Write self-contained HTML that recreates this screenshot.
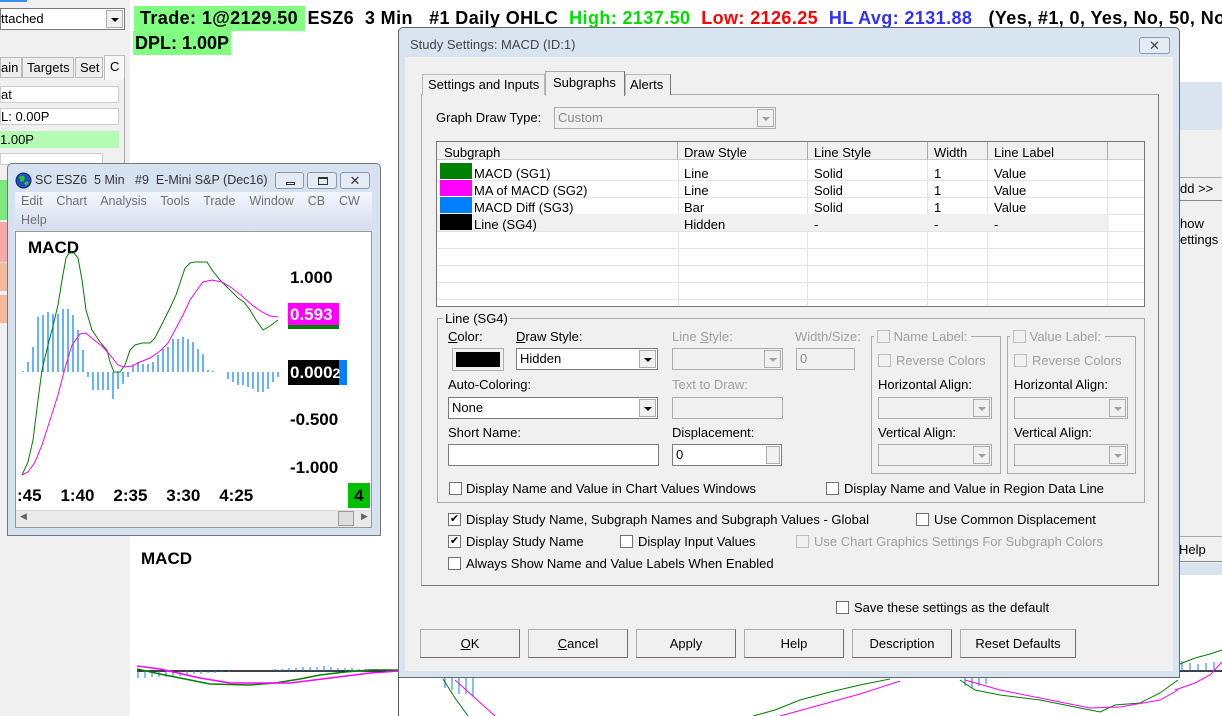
<!DOCTYPE html>
<html><head><meta charset="utf-8"><style>
*{box-sizing:border-box;margin:0;padding:0}
body{width:1222px;height:716px;position:relative;overflow:hidden;background:#fff;font-family:"Liberation Sans",sans-serif;font-size:13px;color:#000}
.a{position:absolute;white-space:nowrap}
.b{font-weight:bold}
.cb{position:absolute;width:13px;height:13px;border:1px solid #707070;background:#fff}
.cb.dis{border-color:#bcbcbc;background:#f0f0f0}
.btn{position:absolute;height:29px;border:1px solid #adadad;border-right-color:#707070;border-bottom-color:#707070;background:#f0f0f0;text-align:center;line-height:27px;font-size:13px}
.combo{position:absolute;height:22px;border:1px solid #7a7a7a;background:#fff;padding-left:3px;line-height:20px}
.combo.dis{border-color:#adadad;background:#f0f0f0;color:#888}
.arr{position:absolute;right:1px;top:1px;width:17px;height:18px;border:1px solid #adadad;background:#f0f0f0}
.arr:after{content:"";position:absolute;left:4px;top:7px;border-left:4px solid transparent;border-right:4px solid transparent;border-top:4px solid #000}
.dis .arr:after{border-top-color:#a0a0a0}
.g{color:#a0a0a0}
</style></head><body>

<!-- left panel -->
<div class="a" style="left:0;top:0;width:130px;height:716px;background:#f0f0f0"></div>
<div class="a" style="left:0;top:0;width:27px;height:2px;background:#3a8ee6"></div>
<div class="combo" style="left:0;top:8px;width:125px;height:22px;padding-left:0;line-height:20px">ttached<div class="arr"></div></div>
<div class="a" style="left:0;top:57px;width:22px;height:21px;border:1px solid #bbb;background:#eee;line-height:20px">ain</div>
<div class="a" style="left:22px;top:57px;width:52px;height:21px;border:1px solid #bbb;background:#eee;line-height:20px;padding-left:4px">Targets</div>
<div class="a" style="left:75px;top:57px;width:28px;height:21px;border:1px solid #bbb;background:#eee;line-height:20px;padding-left:4px">Set</div>
<div class="a" style="left:104px;top:55px;width:21px;height:25px;border:1px solid #bbb;border-bottom:none;background:#f8f8f8;line-height:22px;padding-left:5px">C</div>
<div class="a" style="left:124px;top:78px;width:1px;height:90px;background:#aaa"></div>
<div class="a" style="left:0;top:86px;width:119px;height:17px;border:1px solid #ccc;background:#fff;line-height:15px">at</div>
<div class="a" style="left:0;top:108px;width:119px;height:17px;border:1px solid #ccc;background:#fff;line-height:15px">L: 0.00P</div>
<div class="a" style="left:0;top:131px;width:119px;height:17px;background:#b4fcb4;line-height:17px">1.00P</div>
<div class="a" style="left:0;top:153px;width:103px;height:12px;border:1px solid #ccc;background:#fff"></div>
<div class="a" style="left:0;top:180px;width:7px;height:40px;background:#7ee87e"></div>
<div class="a" style="left:0;top:222px;width:7px;height:40px;background:#f4a8a8"></div>
<div class="a" style="left:0;top:263px;width:7px;height:28px;background:#f4b89a"></div>
<div class="a" style="left:0;top:295px;width:7px;height:28px;background:#f4b89a"></div>

<!-- header -->
<div class="a b" style="left:134px;top:6px;width:171px;height:25px;background:#80ff80"></div>
<div class="a b" style="left:140px;top:8px;font-size:18px;letter-spacing:0.4px">Trade: 1@2129.50 <span style="margin-left:4px">ESZ6&nbsp; 3 Min&nbsp;&nbsp; #1 Daily OHLC</span>&nbsp; <span style="color:#00e000">High: 2137.50</span>&nbsp; <span style="color:#ff0000">Low: 2126.25</span>&nbsp; <span style="color:#3030ff">HL Avg: 2131.88</span>&nbsp;&nbsp; (Yes, #1, 0, Yes, No, 50, No</div>
<div class="a b" style="left:133px;top:31px;width:98px;height:24px;background:#80ff80;font-size:18px;line-height:24px;padding-left:2px">DPL: 1.00P</div>
<div class="a" style="left:398px;top:30px;width:1px;height:686px;background:#555"></div>

<!-- background window at right -->
<div class="a" style="left:1175px;top:82px;width:47px;height:492px;background:#f0f0f0"></div>
<div class="a" style="left:1175px;top:82px;width:47px;height:48px;background:#d9e4f0"></div>
<div class="a" style="left:1175px;top:177px;width:47px;height:24px;border-top:1px solid #aaa;border-bottom:1px solid #888;background:#f0f0f0"></div>
<div class="a" style="left:1180px;top:181px">dd &gt;&gt;</div>
<div class="a" style="left:1180px;top:216px">how</div>
<div class="a" style="left:1180px;top:232px">ettings</div>
<div class="a" style="left:1175px;top:536px;width:47px;height:26px;border-top:1px solid #aaa;border-bottom:1px solid #888"></div>
<div class="a" style="left:1179px;top:542px">Help</div>
<div class="a" style="left:1175px;top:563px;width:47px;height:12px;background:#d9e4f0"></div>

<!-- bottom chart -->
<div class="a b" style="left:141px;top:549px;font-size:17px">MACD</div>
<svg class="a" style="left:0;top:0" width="1222" height="716">
<line x1="137" y1="671" x2="1222" y2="671" stroke="#000" stroke-width="1.5"/>
<g stroke="#0080ff" stroke-width="1">
<path d="M138 671v7M145 671v7M152 671v6M159 671v6M166 671v6M173 671v5M180 671v5M187 671v4M194 671v3M201 671v3M208 671v2M215 671v2M222 671v1M229 671v1M275 671v-2M282 671v-2M289 671v-3M296 671v-3M303 671v-4M310 671v-4M317 671v-4M324 671v-5M331 671v-4M338 671v-3M345 671v-3M352 671v-3M359 671v-2M366 671v-2M373 671v-2M380 671v-1M387 671v-1"/>
<path d="M445 678v10M452 678v12M459 678v16M466 678v16M473 678v18"/>
<path d="M965 678v8M972 678v10M979 678v8M986 678v6M1182 671v-10M1190 671v-8M1198 671v-7M1206 671v-8M1214 671v-9"/>
</g>
<polyline fill="none" stroke="#008000" stroke-width="1.5" points="137,669 160,674 180,678 210,684 250,685 275,683 300,679 320,675 345,672 370,670 398,670"/>
<polyline fill="none" stroke="#ff00ff" stroke-width="1.5" points="137,666 160,669 200,678 230,683 290,683 330,678 370,673 398,671"/>
<polyline fill="none" stroke="#008000" stroke-width="1" points="443,679 455,698 468,716"/>
<polyline fill="none" stroke="#ff00ff" stroke-width="1" points="455,680 475,698 495,716"/>
<polyline fill="none" stroke="#008000" stroke-width="1" points="753,716 775,710 800,700 830,692 860,685 890,679"/>
<polyline fill="none" stroke="#ff00ff" stroke-width="1" points="780,716 820,705 860,694 900,681"/>
<polyline fill="none" stroke="#008000" stroke-width="1" points="960,680 975,690 1000,695 1040,700 1080,708 1100,712 1115,705 1140,703 1160,693 1178,680"/>
<polyline fill="none" stroke="#ff00ff" stroke-width="1" points="965,680 1000,690 1050,700 1090,708 1120,707 1160,700 1178,690"/>
<polyline fill="none" stroke="#008000" stroke-width="1" points="1180,664 1195,658 1210,654 1222,650"/>
<polyline fill="none" stroke="#ff00ff" stroke-width="1" points="1175,690 1195,683 1210,675 1222,662"/>
</svg>

<!-- small chart window -->
<div class="a" style="left:7px;top:163px;width:374px;height:373px;background:#d6e2f0;border:1px solid #777;border-radius:5px 5px 0 0"></div>
<svg class="a" style="left:15px;top:172px" width="17" height="17"><circle cx="8.5" cy="8.5" r="7.5" fill="#2050c0" stroke="#102060"/><path d="M4 5q3-3 6 0l-1 4-3 1zM9 11l3-2 2 2-3 3z" fill="#30c030"/></svg>
<div class="a" style="left:35px;top:173px;font-size:12.5px;color:#333">SC ESZ6&nbsp; 5 Min&nbsp;&nbsp; #9&nbsp; E-Mini S&amp;P (Dec16)</div>
<div class="a" style="left:275px;top:172px;width:29px;height:17px;border:1px solid #8a99b0;border-radius:3px;background:#e4ebf4"><div style="position:absolute;left:10px;top:9px;width:9px;height:3px;border:1px solid #333"></div></div>
<div class="a" style="left:307px;top:172px;width:30px;height:17px;border:1px solid #8a99b0;border-radius:3px;background:#e4ebf4"><div style="position:absolute;left:10px;top:4px;width:10px;height:8px;border:1px solid #333;border-top-width:2px"></div></div>
<div class="a" style="left:340px;top:172px;width:30px;height:17px;border:1px solid #8a99b0;border-radius:3px;background:#e4ebf4;text-align:center;line-height:15px;font-size:13px;color:#333">✕</div>
<div class="a" style="left:15px;top:192px;width:357px;height:38px;background:linear-gradient(#f3f6fb,#d6ddef)"></div>
<div class="a" style="left:21px;top:194px;font-size:12.5px;color:#707070;word-spacing:0">Edit&nbsp;&nbsp;&nbsp; Chart&nbsp;&nbsp;&nbsp; Analysis&nbsp;&nbsp;&nbsp; Tools&nbsp;&nbsp;&nbsp; Trade&nbsp;&nbsp;&nbsp; Window&nbsp;&nbsp;&nbsp; CB&nbsp;&nbsp;&nbsp; CW</div>
<div class="a" style="left:21px;top:213px;font-size:12.5px;color:#707070">Help</div>
<div class="a" style="left:15px;top:231px;width:357px;height:297px;background:#fff;border:1px solid #999"></div>
<div class="a b" style="left:28px;top:238px;font-size:17px">MACD</div>
<svg class="a" style="left:0;top:0" width="400" height="530">
<path stroke="#0080ff" stroke-width="1.2" d="M23 372v-1M28 372v-10M33 372v-25M38 372v-55M43 372v-57M48 372v-60M53 372v-58M58 372v-58M63 372v-63M68 372v-63M73 372v-57M78 372v-42M83 372v-22M88 372v5M93 372v18M98 372v18M103 372v18M108 372v18M113 372v27M118 372v17M123 372v12M128 372v5M133 372v-7M138 372v-10M143 372v-8M148 372v-8M153 372v-10M158 372v-17M163 372v-23M168 372v-25M173 372v-33M178 372v-33M183 372v-35M188 372v-33M193 372v-30M198 372v-23M203 372v-18M208 372v-2M213 372v-1M228 372v7M233 372v10M238 372v13M243 372v13M248 372v15M253 372v17M258 372v20M263 372v20M268 372v17M273 372v10M278 372v5"/>
<polyline fill="none" stroke="#008000" stroke-width="1" points="22,475 28,462 33,440 38,400 42,370 48,345 52,330 58,305 62,280 66,258 69,253 74,253 78,258 82,280 86,310 92,330 100,342 107,350 110,362 114,372 120,372 125,365 130,350 135,345 142,343 150,343 155,338 160,328 165,318 170,308 176,295 181,280 185,268 190,263 195,262 200,262 207,262 212,270 220,280 228,288 238,298 244,302 250,310 256,320 263,330 270,326 278,320"/>
<polyline fill="none" stroke="#ff00ff" stroke-width="1" points="22,475 28,472 35,462 42,445 50,420 58,395 65,368 72,345 80,334 86,333 94,340 102,346 110,355 118,365 124,367 132,366 140,362 150,358 160,351 168,343 175,330 183,315 190,300 197,290 203,282 212,280 222,282 232,288 242,296 252,305 262,312 270,316 278,317"/>
</svg>
<div class="a b" style="left:290px;top:268px;font-size:17px">1.000</div>
<div class="a" style="left:288px;top:303px;width:51px;height:22px;background:#ff00ff"></div>
<div class="a" style="left:288px;top:325px;width:51px;height:4px;background:#008000"></div>
<div class="a b" style="left:290px;top:305px;font-size:17px;color:#fff">0.593</div>
<div class="a" style="left:288px;top:360px;width:59px;height:25px;background:#0080ff"></div>
<div class="a" style="left:288px;top:360px;width:51px;height:25px;background:#000"></div>
<div class="a b" style="left:290px;top:363px;font-size:17px;color:#fff">0.000<span style="font-size:14px">2</span></div>
<div class="a b" style="left:290px;top:410px;font-size:17px">-0.500</div>
<div class="a b" style="left:290px;top:458px;font-size:17px">-1.000</div>
<div class="a b" style="left:17px;top:486px;font-size:17px">:45&nbsp;&nbsp;&nbsp; 1:40&nbsp;&nbsp;&nbsp; 2:35&nbsp;&nbsp;&nbsp; 3:30&nbsp;&nbsp;&nbsp; 4:25</div>
<div class="a b" style="left:348px;top:483px;width:22px;height:25px;background:#00c000;font-size:17px;text-align:center;line-height:25px">4</div>
<div class="a" style="left:16px;top:510px;width:355px;height:17px;background:#eaeaea;border-top:1px solid #ddd"></div>
<div class="a" style="left:20px;top:511px;font-size:9px;color:#666">◀</div>
<div class="a" style="left:338px;top:511px;width:16px;height:15px;border:1px solid #999;background:#ddd"></div>
<div class="a" style="left:361px;top:511px;font-size:9px;color:#666">▶</div>

<!-- dialog -->
<div class="a" style="left:398px;top:27px;width:782px;height:651px;background:#d9e4f1;border:1px solid #666;border-radius:5px 5px 0 0"></div>
<div class="a" style="left:410px;top:37px;font-size:13px;color:#444">Study Settings: MACD (ID:1)</div>
<div class="a" style="left:1139px;top:37px;width:31px;height:17px;border:1px solid #8a99b0;border-radius:3px;background:#e4ebf4;text-align:center;line-height:15px;color:#444">✕</div>
<div class="a" style="left:405px;top:57px;width:768px;height:614px;background:#f0f0f0"></div>
<!-- tabs -->
<div class="a" style="left:421px;top:94px;width:738px;height:492px;border:1px solid #aaa;border-right-color:#777;border-bottom-color:#777;background:#f0f0f0"></div>
<div class="a" style="left:422px;top:74px;width:123px;height:21px;border:1px solid #bbb;border-bottom:none;background:#f0f0f0;padding-left:5px;line-height:20px">Settings and Inputs</div>
<div class="a" style="left:545px;top:71px;width:80px;height:25px;border:1px solid #aaa;border-bottom:none;border-right-color:#777;background:#f0f0f0;padding-left:7px;line-height:22px">Subgraphs</div>
<div class="a" style="left:625px;top:74px;width:46px;height:21px;border:1px solid #bbb;border-right-color:#777;border-bottom:none;background:#f0f0f0;padding-left:4px;line-height:20px">Alerts</div>
<div class="a" style="left:436px;top:110px">Graph Draw Type:</div>
<div class="combo dis" style="left:554px;top:107px;width:222px">Custom<div class="arr"></div></div>
<!-- table -->
<div class="a" style="left:436px;top:141px;width:709px;height:166px;border:1px solid #777;background:#fff"></div>
<div class="a" style="left:437px;top:142px;width:707px;height:18px;background:#f0f0f0;border-bottom:1px solid #ccc"></div>
<svg class="a" style="left:0;top:0" width="1222" height="320">
<g stroke="#e3e3e3"><path d="M437 180.5H1144M437 197.5H1144M437 214.5H1144M437 231.5H1144M437 248.5H1144M437 265.5H1144M437 282.5H1144M437 299.5H1144M678.5 160V306M807.5 160V306M927.5 160V306M987.5 160V306M1107.5 160V306"/></g>
<g stroke="#aaa"><path d="M677.5 142V160M807.5 142V160M927.5 142V160M987.5 142V160M1107.5 142V160"/></g>
</svg>
<div class="a" style="left:437px;top:214px;width:672px;height:17px;background:#f0f0f0"></div>
<div class="a" style="left:444px;top:145px">Subgraph</div>
<div class="a" style="left:684px;top:145px">Draw Style</div>
<div class="a" style="left:814px;top:145px">Line Style</div>
<div class="a" style="left:934px;top:145px">Width</div>
<div class="a" style="left:994px;top:145px">Line Label</div>
<div class="a" style="left:440px;top:163px;width:32px;height:16px;background:#008000"></div>
<div class="a" style="left:440px;top:180px;width:32px;height:16px;background:#ff00ff"></div>
<div class="a" style="left:440px;top:197px;width:32px;height:16px;background:#0080ff"></div>
<div class="a" style="left:440px;top:214px;width:32px;height:16px;background:#000"></div>
<div class="a" style="left:474px;top:165px;line-height:17px">MACD (SG1)<br>MA of MACD (SG2)<br>MACD Diff (SG3)<br>Line (SG4)</div>
<div class="a" style="left:684px;top:165px;line-height:17px">Line<br>Line<br>Bar<br>Hidden</div>
<div class="a" style="left:814px;top:165px;line-height:17px">Solid<br>Solid<br>Solid<br>-</div>
<div class="a" style="left:934px;top:165px;line-height:17px">1<br>1<br>1<br>-</div>
<div class="a" style="left:994px;top:165px;line-height:17px">Value<br>Value<br>Value<br>-</div>
<!-- group -->
<div class="a" style="left:437px;top:318px;width:708px;height:185px;border:1px solid #aaa"></div>
<div class="a" style="left:443px;top:311px;background:#f0f0f0;padding:0 2px">Line (SG4)</div>
<div class="a" style="left:448px;top:329px"><u>C</u>olor:</div>
<div class="a" style="left:516px;top:329px"><u>D</u>raw Style:</div>
<div class="a g" style="left:672px;top:329px">Line <u>S</u>tyle:</div>
<div class="a g" style="left:795px;top:329px">Width/Size:</div>
<div class="a" style="left:452px;top:348px;width:52px;height:23px;border:1px solid #adadad;background:#f0f0f0"><div style="position:absolute;left:3px;top:3px;width:44px;height:15px;background:#000"></div></div>
<div class="combo" style="left:516px;top:348px;width:142px">Hidden<div class="arr"></div></div>
<div class="combo dis" style="left:672px;top:348px;width:111px"><div class="arr"></div></div>
<div class="combo dis" style="left:796px;top:348px;width:59px">0</div>
<div class="a" style="left:448px;top:377px">Auto-Coloring:</div>
<div class="a g" style="left:672px;top:377px">Text to Draw:</div>
<div class="combo" style="left:448px;top:397px;width:210px">None<div class="arr"></div></div>
<div class="combo dis" style="left:672px;top:397px;width:111px"></div>
<div class="a" style="left:448px;top:425px">Short Name:</div>
<div class="a" style="left:672px;top:425px">Displacement:</div>
<div class="combo" style="left:448px;top:444px;width:211px"></div>
<div class="combo" style="left:672px;top:444px;width:110px">0<div style="position:absolute;right:1px;top:1px;width:14px;height:18px;border:1px solid #adadad;background:#f0f0f0"></div></div>
<div class="a" style="left:871px;top:336px;width:130px;height:138px;border:1px solid #aaa"></div>
<div class="a" style="left:1007px;top:336px;width:129px;height:138px;border:1px solid #aaa"></div>
<div class="a g" style="left:874px;top:329px;background:#f0f0f0;padding:0 4px 0 3px"><span class="cb dis" style="position:relative;display:inline-block;vertical-align:-2px"></span>&nbsp;Name Label:</div>
<div class="a g" style="left:1010px;top:329px;background:#f0f0f0;padding:0 4px 0 3px"><span class="cb dis" style="position:relative;display:inline-block;vertical-align:-2px"></span>&nbsp;Value Label:</div>
<div class="cb dis" style="left:878px;top:354px"></div><div class="a g" style="left:896px;top:353px">Reverse Colors</div>
<div class="cb dis" style="left:1014px;top:354px"></div><div class="a g" style="left:1032px;top:353px">Reverse Colors</div>
<div class="a" style="left:878px;top:377px">Horizontal Align:</div>
<div class="a" style="left:1014px;top:377px">Horizontal Align:</div>
<div class="combo dis" style="left:878px;top:397px;width:114px"><div class="arr"></div></div>
<div class="combo dis" style="left:1014px;top:397px;width:114px"><div class="arr"></div></div>
<div class="a" style="left:878px;top:425px">Vertical Align:</div>
<div class="a" style="left:1014px;top:425px">Vertical Align:</div>
<div class="combo dis" style="left:878px;top:444px;width:114px"><div class="arr"></div></div>
<div class="combo dis" style="left:1014px;top:444px;width:114px"><div class="arr"></div></div>
<div class="cb" style="left:449px;top:482px"></div><div class="a" style="left:466px;top:481px">Display Name and Value in Chart Values Windows</div>
<div class="cb" style="left:826px;top:482px"></div><div class="a" style="left:844px;top:481px">Display Name and Value in Region Data Line</div>
<!-- global checks -->
<div class="cb" style="left:448px;top:513px;font-size:11px;line-height:11px;text-align:center">✔</div><div class="a" style="left:466px;top:512px">Display Study Name, Subgraph Names and Subgraph Values - Global</div>
<div class="cb" style="left:916px;top:513px"></div><div class="a" style="left:934px;top:512px">Use Common Displacement</div>
<div class="cb" style="left:448px;top:535px;font-size:11px;line-height:11px;text-align:center">✔</div><div class="a" style="left:466px;top:534px">Display Study Name</div>
<div class="cb" style="left:620px;top:535px"></div><div class="a" style="left:638px;top:534px">Display Input Values</div>
<div class="cb dis" style="left:796px;top:535px"></div><div class="a g" style="left:814px;top:534px">Use Chart Graphics Settings For Subgraph Colors</div>
<div class="cb" style="left:448px;top:557px"></div><div class="a" style="left:466px;top:556px">Always Show Name and Value Labels When Enabled</div>
<div class="cb" style="left:836px;top:601px"></div><div class="a" style="left:854px;top:600px">Save these settings as the default</div>
<div class="btn" style="left:420px;top:629px;width:100px"><u>O</u>K</div>
<div class="btn" style="left:528px;top:629px;width:100px"><u>C</u>ancel</div>
<div class="btn" style="left:636px;top:629px;width:100px">Apply</div>
<div class="btn" style="left:744px;top:629px;width:100px">Help</div>
<div class="btn" style="left:852px;top:629px;width:100px">Description</div>
<div class="btn" style="left:960px;top:629px;width:116px">Reset Defaults</div>
</body></html>
